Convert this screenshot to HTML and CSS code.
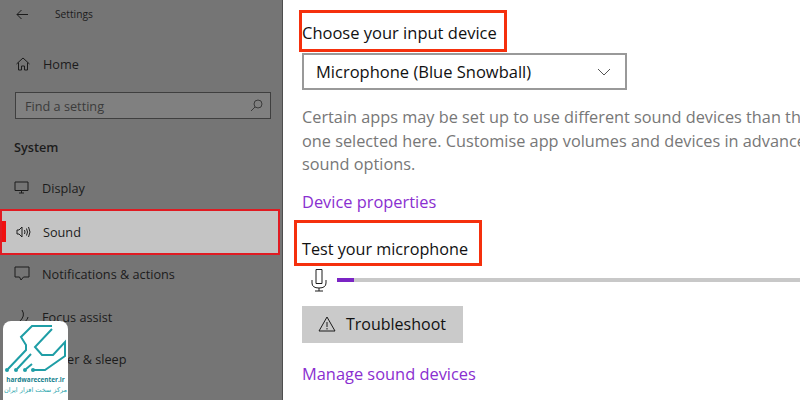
FILE: index.html
```html
<!DOCTYPE html>
<html lang="en">
  <head>
    <meta charset="UTF-8" />
    <title>Settings - Sound</title>
    <link rel="stylesheet" href="styles.css">
  </head>
  <body>
    <div class="sidebar">
      <div class="title-bar">
        <svg class="back-icon" width="12" height="11" viewBox="0 0 12 11"><path d="M5.500 1 1 5.500l4.500 4.500M1 5.500h11" /></svg>
        <span>Settings</span>
      </div>

      <div class="nav-item home">
        <svg class="icon" width="14" height="14" viewBox="0 0 14 14"><path d="M.5 7 7 1l6.500 6M2.500 5.500V13h3V9h3v4h3V5.500" /></svg>
        <span>Home</span>
      </div>

      <div class="search">
        <span>Find a setting</span>
        <svg class="icon" width="13" height="13" viewBox="0 0 13 13"><circle cx="8" cy="5" r="4" /><path d="M5 8 1 12" /></svg>
      </div>

      <div class="section-title">System</div>

      <div class="nav-item display">
        <svg class="icon" width="16" height="14" viewBox="0 0 16 14"><path d="M1 1h13v8.500H1zM5 12h5M7.500 10v2" /></svg>
        <span>Display</span>
      </div>

      <div class="nav-item sound">
        <i class="active-mark"></i>
        <svg class="icon" width="16" height="14" viewBox="0 0 16 14"><path d="M1 5h2l3-3v10L3 9H1zM8.500 5q1 2 0 4M10.500 3.500q2 3.500 0 7M12.500 2q3 5 0 10" /></svg>
        <span>Sound</span>
      </div>

      <div class="nav-item">
        <svg class="icon" width="16" height="15" viewBox="0 0 16 15"><path d="M1 1h14v10H9.500L7 14l-1.500-3H1z" /></svg>
        <span>Notifications &amp; actions</span>
      </div>

      <div class="nav-item">
        <svg class="icon" width="16" height="15" viewBox="0 0 16 15"><path d="M8 1q4 6-3 12 8 1 9-5" /></svg>
        <span>Focus assist</span>
      </div>

      <div class="nav-item last">
        <span class="spacer"></span>
        <span>Power &amp; sleep</span>
      </div>
    </div>

    <div class="content">
      <h3 class="marked first">Choose your input device</h3>

      <div class="select">
        <span>Microphone (Blue Snowball)</span>
        <svg width="14" height="8" viewBox="0 0 14 8"><path d="M1 1l6 6 6-6" /></svg>
      </div>

      <p class="note">
        Certain apps may be set up to use different sound devices than the<br />
        one selected here. Customise app volumes and devices in advanced<br />
        sound options.
      </p>

      <a class="link">Device properties</a>

      <h3 class="marked second">Test your microphone</h3>

      <div class="meter">
        <svg width="18" height="24" viewBox="0 0 18 24"><path d="M6 1.500h6v14H6zM2 12v3q0 5 7 5t7-5v-3M9 20v3M5 23h8" /></svg>
        <div class="track"><div class="level"></div></div>
      </div>

      <div class="button">
        <svg width="18" height="16" viewBox="0 0 18 16"><path d="M9 1 1 15h16zM9 6v5M9 12v1.500" /></svg>
        <span>Troubleshoot</span>
      </div>

      <a class="link">Manage sound devices</a>
    </div>

    <div class="logo">
      <svg width="65" height="54" viewBox="0 0 65 54">
        <path d="M49 5H29L18 16l5 8v5L5 48M14 48l14-15M23 48l6-5M30 49h12l20-14V21L50 34H39l-7-8L49 8" />
        <circle cx="4" cy="49" r="2" />
        <circle cx="13" cy="49" r="2" />
        <circle cx="22" cy="49" r="2" />
        <circle cx="30" cy="49" r="2" />
      </svg>
      <div class="logo-name">hardwarecenter.ir</div>
      <div class="logo-sub" lang="fa" dir="rtl">مرکز سخت افزار ایران</div>
    </div>
  </body>
</html>
```

FILE: styles.css
```css
html,
body {
  height: 100%;
}

body {
  margin: 0;
  width: 800px;
  height: 400px;
  overflow: hidden;
  display: flex;
  font-family: "Open Sans", sans-serif;
  background: white;
}

svg {
  flex: none;
  fill: none;
  stroke: #1c1c1c;
  stroke-width: 1;
}

.sidebar {
  width: 282px;
  height: 400px;
  flex: none;
  overflow: hidden;
  background: #757575;
  border-right: 1px solid #4e4e4e;
  color: #1c1c1c;
  font-size: 12.700px;
}

.title-bar {
  display: flex;
  align-items: center;
  gap: 27px;
  height: 28px;
  padding-left: 16px;
  font-size: 10.200px;
}

.nav-item {
  display: flex;
  align-items: center;
  gap: 12px;
  height: 43px;
  padding-left: 14px;
  box-sizing: border-box;
}

.home {
  margin-top: 14px;
  height: 44px;
  padding-left: 16px;
  gap: 13px;
}

.last {
  margin-top: -1px;
}

.search {
  display: flex;
  align-items: center;
  justify-content: space-between;
  width: 256px;
  height: 27px;
  margin: 6px 0 0 15px;
  padding: 0 7px 0 9px;
  box-sizing: border-box;
  border: 1px solid #3f3f3f;
  background: #808080;
  color: #3b3b3b;
}

.search svg {
  stroke: #3b3b3b;
}

.section-title {
  margin: 18px 0 0 14px;
  height: 20px;
  line-height: 20px;
  font-weight: 600;
}

.display {
  margin-top: 10px;
  height: 42px;
}

.sound {
  position: relative;
  width: 280px;
  height: 46px;
  margin-bottom: -3px;
  gap: 11px;
  background: #c4c4c4;
  border: 2px solid #e01b22;
}

.active-mark {
  position: absolute;
  left: 0;
  top: 10px;
  width: 4px;
  height: 21px;
  background: #f01010;
}

.spacer {
  width: 16px;
}

.content {
  flex: 1;
  min-width: 0;
  padding-left: 19px;
  overflow: hidden;
  color: #111;
  font-size: 16.500px;
}

h3 {
  margin: 0;
  font-size: 16.500px;
  font-weight: 400;
  white-space: nowrap;
}

.marked {
  box-sizing: border-box;
  border: 3px solid #f5300d;
}

.first {
  width: 208px;
  height: 42px;
  margin: 10px 0 0 -3px;
  padding: 8px 0 0 0;
}

.second {
  width: 188px;
  height: 46px;
  margin: 7px 0 0 -8px;
  padding: 15px 0 0 5px;
  font-size: 16.200px;
}

.select {
  display: flex;
  align-items: center;
  justify-content: space-between;
  width: 325px;
  height: 37px;
  margin-top: 1px;
  padding: 0 14px 0 12px;
  box-sizing: border-box;
  border: 2px solid #999;
}

.select svg {
  stroke: #555;
}

.note {
  margin: 16px 0 0;
  width: 600px;
  line-height: 23.500px;
  font-size: 16.300px;
  color: #777;
  white-space: nowrap;
}

.link {
  display: block;
  margin-top: 14px;
  font-size: 16.400px;
  line-height: 22px;
  color: #8a2fd0;
}

.meter {
  display: flex;
  align-items: center;
  gap: 9px;
  margin-top: 2px;
  padding-left: 8px;
}

.track {
  flex: 1;
  height: 4px;
  background: #c8c8c8;
}

.level {
  width: 17px;
  height: 4px;
  background: #7b24c4;
}

.button {
  display: flex;
  align-items: center;
  gap: 10px;
  width: 161px;
  height: 37px;
  margin-top: 14px;
  padding-left: 16px;
  box-sizing: border-box;
  background: #cacaca;
  font-size: 16px;
}

.button + .link {
  margin-top: 20px;
}

.logo {
  position: absolute;
  left: 3px;
  top: 321px;
  width: 65px;
  height: 79px;
  background: white;
  border-radius: 8px 8px 0 0;
  text-align: center;
  overflow: hidden;
}

.logo svg {
  display: block;
  stroke: #1f9ea6;
  stroke-width: 2;
}

.logo circle {
  fill: #1f9ea6;
  stroke: none;
}

.logo-name {
  font-size: 6.400px;
  font-weight: 700;
  line-height: 9px;
  color: #14808c;
}

.logo-sub {
  font-family: "DejaVu Sans", sans-serif;
  font-size: 6.500px;
  line-height: 12px;
  white-space: nowrap;
  color: #2aa5ad;
}
```
